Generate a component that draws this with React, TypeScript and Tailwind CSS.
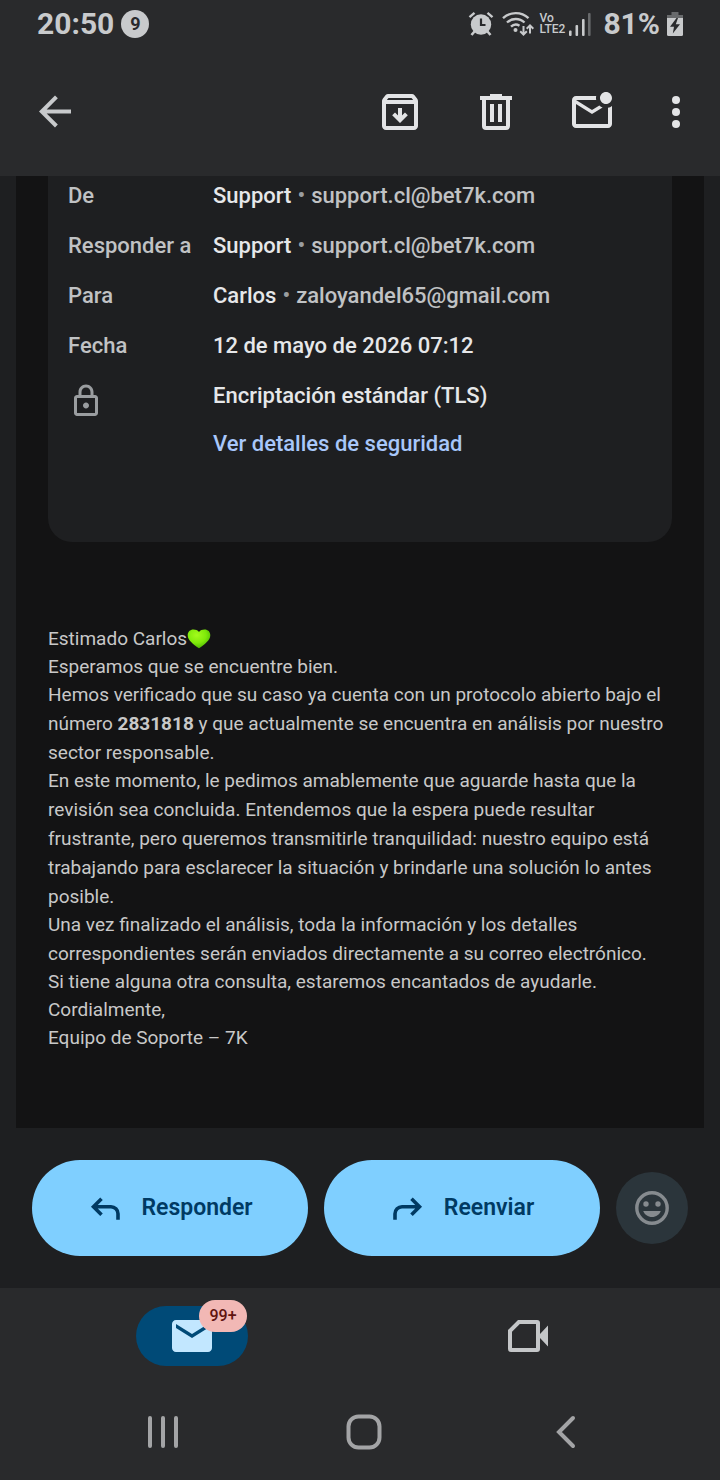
import type { ReactNode } from 'react';

interface DetailRow {
  label: string;
  name: string;
  address?: string;
}

const details: DetailRow[] = [
  { label: 'De', name: 'Support', address: 'support.cl@bet7k.com' },
  { label: 'Responder a', name: 'Support', address: 'support.cl@bet7k.com' },
  { label: 'Para', name: 'Carlos', address: 'zaloyandel65@gmail.com' },
  { label: 'Fecha', name: '12 de mayo de 2026 07:12' },
];

const paragraphs: ReactNode[] = [
  <>Estimado Carlos<GreenHeart /></>,
  'Esperamos que se encuentre bien.',
  <>
    Hemos verificado que su caso ya cuenta con un protocolo abierto bajo el número{' '}
    <strong className="font-bold">2831818</strong> y que actualmente se encuentra en análisis por
    nuestro sector responsable.
  </>,
  'En este momento, le pedimos amablemente que aguarde hasta que la revisión sea concluida. Entendemos que la espera puede resultar frustrante, pero queremos transmitirle tranquilidad: nuestro equipo está trabajando para esclarecer la situación y brindarle una solución lo antes posible.',
  'Una vez finalizado el análisis, toda la información y los detalles correspondientes serán enviados directamente a su correo electrónico.',
  'Si tiene alguna otra consulta, estaremos encantados de ayudarle.',
  'Cordialmente,',
  'Equipo de Soporte – 7K',
];

function GreenHeart() {
  return (
    <svg viewBox="0 0 24 20" className="inline-block h-5 w-6 align-[-4px]" role="img" aria-label="corazón verde">
      <defs>
        <radialGradient id="heart" cx="0.4" cy="0.3" r="0.75">
          <stop offset="0" stopColor="#a4fb1c" />
          <stop offset="0.55" stopColor="#7fea0a" />
          <stop offset="1" stopColor="#48b004" />
        </radialGradient>
      </defs>
      <path
        d="M12 3C10.700 1.300 8.600.6 6.500.6 3 .6.7 3 .7 6.200c0 5.300 6 9.300 11.300 13.100 5.300-3.800 11.300-7.800 11.300-13.100C23.300 3 21 .6 17.500.6c-2.100 0-4.200.7-5.500 2.400z"
        fill="url(#heart)"
      />
    </svg>
  );
}

function StatusBar() {
  return (
    <div className="flex h-12 items-center justify-between px-[37px] text-[#c8cacc]">
      <div className="flex items-center gap-[7px]">
        <span className="text-[30px] leading-9 font-bold">20:50</span>
        <span className="flex size-7 items-center justify-center rounded-full bg-[#c8cacc] text-lg leading-5 font-bold text-[#292a2c]">
          9
        </span>
      </div>
      <div className="flex items-center">
        {/* Alarm */}
        <svg viewBox="0 0 26 26" className="mr-2 size-[26px]" fill="none" stroke="currentColor">
          <circle cx="13" cy="13.500" r="10.200" fill="currentColor" stroke="none" />
          <path d="M1.500 6.200l5-4.400M24.500 6.200l-5-4.400" strokeWidth="2.400" />
          <path d="M6.500 20.500l-3 3.500M19.500 20.500l3 3.500" strokeWidth="2.600" />
          <path d="M13 7.500v6.500h4.500" stroke="#292a2c" strokeWidth="2.200" />
        </svg>
        {/* Wifi with traffic arrows */}
        <svg viewBox="0 0 32 26" className="mr-[5px] h-[26px] w-8" fill="none" stroke="currentColor">
          <path d="M1 7.200a18.500 18.500 0 0 1 25.500 0M5 11.500a12.700 12.700 0 0 1 17.500 0M9 15.700a7 7 0 0 1 8.500-1" strokeWidth="2.400" />
          <circle cx="13.500" cy="19" r="2" fill="currentColor" stroke="none" />
          <path d="M21.500 15v8M18.200 20.300l3.300 3.300 3.300-3.300" strokeWidth="2" />
          <path d="M28 22.500v-8M24.700 17.700l3.300-3.300 3.300 3.300" strokeWidth="2" />
        </svg>
        <span className="mr-1 flex flex-col text-xs leading-[11px] font-medium">
          <span>Vo</span>
          <span>LTE2</span>
        </span>
        {/* Signal */}
        <svg viewBox="0 0 22 24" className="mr-3 h-6 w-[22px]" fill="currentColor">
          <rect x="0" y="18.500" width="2.600" height="5.500" rx="1" />
          <rect x="6.500" y="13" width="2.600" height="11" rx="1" />
          <rect x="13" y="7" width="2.600" height="17" rx="1" />
          <rect x="19" y="1" width="2.600" height="23" rx="1" opacity="0.4" />
        </svg>
        <span className="mr-[7px] text-[30px] leading-9 font-bold">81%</span>
        {/* Battery */}
        <svg viewBox="0 0 16 24" className="h-6 w-4" fill="currentColor">
          <path d="M4.500 0h7v3H16v4H0V3h4.500z" opacity="0.4" />
          <path d="M0 6h16v16.500a1.500 1.500 0 0 1-1.500 1.500h-13A1.500 1.500 0 0 1 0 22.500z" />
          <path d="M9.500 6L3 14.800h4L5.800 21.500 13 12.300H8.800L11 6z" fill="#292a2c" />
        </svg>
      </div>
    </div>
  );
}

function Toolbar() {
  return (
    <div className="flex h-32 items-center pr-2 pl-[7px] text-[#e3e4e6]">
      <button aria-label="Atrás" className="flex h-24 w-24 items-center justify-center text-[#c8cacc]">
        <svg viewBox="0 0 24 24" className="size-12" fill="currentColor">
          <path d="M20 10.700H7.830l5.590-5.590L12 3.700l-8 8 8 8 1.410-1.410L7.830 12.700H20v-2z" />
        </svg>
      </button>
      <div className="flex-1" />
      <button aria-label="Archivar" className="flex h-24 w-24 items-center justify-center">
        <svg viewBox="0 0 24 24" className="size-12" fill="currentColor">
          <path d="M20.540 5.230l-1.390-1.680C18.880 3.210 18.470 3 18 3H6c-.47 0-.88.21-1.160.55L3.460 5.230C3.170 5.570 3 6.020 3 6.500V19c0 1.100.9 2 2 2h14c1.100 0 2-.9 2-2V6.500c0-.48-.17-.93-.46-1.270zM6.240 5h11.520l.83 1H5.420l.82-1zM5 19V8h14v11H5z" />
          <path d="M12 10v6M8.800 12.900l3.200 3.200 3.200-3.200" fill="none" stroke="currentColor" strokeWidth="2" />
        </svg>
      </button>
      <button aria-label="Eliminar" className="flex h-24 w-24 items-center justify-center">
        <svg viewBox="0 0 24 24" className="size-12" fill="currentColor">
          <path d="M9 3h6v1h5v2h-1v13a2 2 0 0 1-2 2H7a2 2 0 0 1-2-2V6H4V4h5zM7 6v13h10V6z" fillRule="evenodd" />
          <path d="M9 8h2v9H9zM13 8h2v9h-2z" />
        </svg>
      </button>
      <button aria-label="Marcar como no leído" className="flex h-24 w-24 items-center justify-center">
        <svg viewBox="0 0 24 24" className="size-12" fill="currentColor">
          <path d="M22 8.980V18c0 1.100-.9 2-2 2H4c-1.100 0-2-.9-2-2V6c0-1.100.9-2 2-2h10.100c-.06.32-.1.66-.1 1 0 .34.04.68.1 1H4l8 5 3.670-2.290c.47.43 1.020.76 1.630.98L12 13 4 8v10h16V9.900c.74-.15 1.420-.48 2-.92zM16 5c0 1.660 1.340 3 3 3s3-1.340 3-3-1.340-3-3-3-3 1.340-3 3z" />
        </svg>
      </button>
      <button aria-label="Más opciones" className="flex h-24 w-[72px] items-center justify-center">
        <svg viewBox="0 0 24 24" className="size-12" fill="currentColor">
          <circle cx="12" cy="6" r="2" />
          <circle cx="12" cy="12" r="2" />
          <circle cx="12" cy="18" r="2" />
        </svg>
      </button>
    </div>
  );
}

function DetailsCard() {
  return (
    <section className="rounded-b-3xl bg-[#1e1f21] px-5 pt-[7px] pb-[85px] text-[22px] leading-[26px] font-medium text-[#c0c2c4]">
      <dl className="flex flex-col gap-6">
        {details.map((row) => (
          <div key={row.label} className="grid grid-cols-[145px_1fr]">
            <dt>{row.label}</dt>
            <dd className="flex gap-[6px]">
              <span className="text-[#e6e7e9]">{row.name}</span>
              {row.address && (
                <>
                  <span className="text-[#9a9da0]">•</span>
                  <span>{row.address}</span>
                </>
              )}
            </dd>
          </div>
        ))}
        <div className="grid grid-cols-[145px_1fr]">
          <dt>
            <svg viewBox="0 0 24 24" className="size-9 text-[#9a9da0]" fill="currentColor" role="img" aria-label="Seguridad">
              <path d="M18 8h-1V6c0-2.760-2.240-5-5-5S7 3.240 7 6v2H6c-1.100 0-2 .9-2 2v10c0 1.100.9 2 2 2h12c1.100 0 2-.9 2-2V10c0-1.100-.9-2-2-2zM9 6c0-1.660 1.340-3 3-3s3 1.340 3 3v2H9V6zm9 14H6V10h12v10zm-6-3c1.100 0 2-.9 2-2s-.9-2-2-2-2 .9-2 2 .9 2 2 2z" />
            </svg>
          </dt>
          <dd className="flex flex-col items-start gap-[22px]">
            <span className="text-[#e6e7e9]">Encriptación estándar (TLS)</span>
            <a href="#seguridad" className="text-[#a8c7fa]">
              Ver detalles de seguridad
            </a>
          </dd>
        </div>
      </dl>
    </section>
  );
}

function ReplyBar() {
  return (
    <div className="flex items-center gap-4 px-8 py-8 text-[23px] leading-7 font-semibold text-[#003a63]">
      <button className="flex h-24 flex-1 items-center justify-center gap-[18px] rounded-full bg-[#7fcfff]">
        <svg viewBox="0 0 36 36" className="size-9" fill="none" stroke="currentColor" strokeWidth="3.600">
          <path d="M14.500 8.700l-8 8 8 8M7 16.700h17a7 7 0 0 1 7 7v6" />
        </svg>
        Responder
      </button>
      <button className="flex h-24 flex-1 items-center justify-center gap-[18px] rounded-full bg-[#7fcfff]">
        <svg viewBox="0 0 36 36" className="size-9" fill="none" stroke="currentColor" strokeWidth="3.600">
          <path d="M21.500 8.700l8 8-8 8M29 16.700H12a7 7 0 0 0-7 7v6" />
        </svg>
        Reenviar
      </button>
      <button aria-label="Reaccionar" className="flex size-[72px] items-center justify-center rounded-full bg-[#2b353b] text-[#868b8f]">
        <svg viewBox="0 0 40 40" className="size-10" fill="currentColor">
          <circle cx="20" cy="20" r="15.200" fill="none" stroke="currentColor" strokeWidth="3.400" />
          <circle cx="14" cy="16" r="2.700" />
          <circle cx="26" cy="16" r="2.700" />
          <path d="M11.200 23h17.600c-1.300 3.600-4.700 6-8.800 6s-7.500-2.400-8.800-6z" />
        </svg>
      </button>
    </div>
  );
}

function BottomNav() {
  return (
    <nav className="grid h-24 grid-cols-2 items-center justify-items-center px-6">
      <button aria-label="Correo" className="relative flex h-[60px] w-28 items-center justify-center rounded-full bg-[#004a77] text-[#c2e7ff]">
        <svg viewBox="0 0 24 24" className="size-12" fill="currentColor">
          <path d="M20 4H4c-1.100 0-2 .9-2 2v12c0 1.100.9 2 2 2h16c1.100 0 2-.9 2-2V6c0-1.100-.9-2-2-2zm0 4l-8 5-8-5V6l8 5 8-5v2z" />
        </svg>
        <span className="absolute -top-[6px] right-px flex h-8 w-12 items-center justify-center rounded-full bg-[#f2b8b5] text-base font-medium text-[#601410]">
          99+
        </span>
      </button>
      <button aria-label="Meet" className="flex h-[60px] w-28 items-center justify-center text-[#c4c6c8]">
        <svg viewBox="0 0 24 24" className="size-12" fill="currentColor">
          <path d="M7 4h9.500A1.500 1.500 0 0 1 18 5.500V11l4-4.200v10.400L18 13v5.500a1.500 1.500 0 0 1-1.500 1.500h-13A1.500 1.500 0 0 1 2 18.500V9zM7.900 6L4 9.900V18h12V6z" fillRule="evenodd" />
        </svg>
      </button>
    </nav>
  );
}

function SystemNav() {
  return (
    <div className="grid h-24 grid-cols-3 items-center justify-items-center pr-14 pl-16 text-[#a3a4a6]">
      <button aria-label="Recientes" className="p-4">
        <svg viewBox="0 0 36 36" className="size-9" fill="none" stroke="currentColor" strokeWidth="4" strokeLinecap="round">
          <path d="M4 4v28M17 4v28M30 4v28" />
        </svg>
      </button>
      <button aria-label="Inicio" className="p-4">
        <svg viewBox="0 0 36 36" className="size-9" fill="none" stroke="currentColor" strokeWidth="4">
          <rect x="2.500" y="2.500" width="31" height="31" rx="10" />
        </svg>
      </button>
      <button aria-label="Volver" className="p-4">
        <svg viewBox="0 0 36 36" className="size-9" fill="none" stroke="currentColor" strokeWidth="4" strokeLinecap="round">
          <path d="M27 4L13 18l14 14" />
        </svg>
      </button>
    </div>
  );
}

export default function App() {
  return (
    <div className="flex min-h-screen flex-col bg-[#1e1f21] font-['Roboto',sans-serif]">
      <header className="bg-[#292a2c]">
        <StatusBar />
        <Toolbar />
      </header>
      <main className="flex-1">
        <article className="mx-4 bg-[#131314] px-8 pb-[76px]">
          <DetailsCard />
          <div className="mt-[82px] flex flex-col -space-y-px text-[19px] leading-[29px] text-[#c8c8c8]">
            {paragraphs.map((text, i) => (
              <p key={i}>{text}</p>
            ))}
          </div>
        </article>
        <ReplyBar />
      </main>
      <footer className="bg-[#292a2c]">
        <BottomNav />
        <SystemNav />
      </footer>
    </div>
  );
}
